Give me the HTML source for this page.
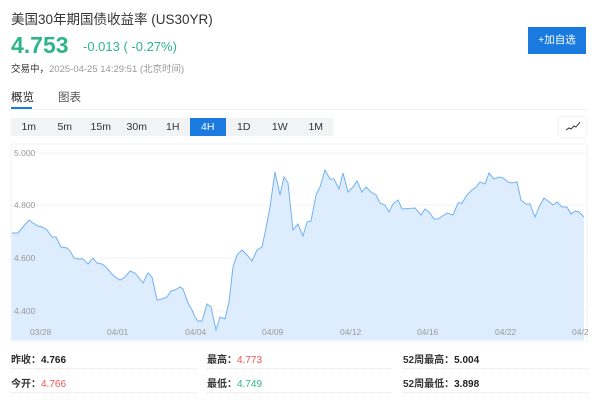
<!DOCTYPE html>
<html><head><meta charset="utf-8"><style>
*{margin:0;padding:0;box-sizing:border-box}
body{width:600px;height:407px;background:#fff;font-family:"Liberation Sans","Noto Sans CJK SC",sans-serif;position:relative;overflow:hidden;color:#333}
.a{position:absolute;white-space:nowrap}
.pb{position:absolute;top:118px;height:18px;width:35.5px;font-size:10.5px;line-height:18px;text-align:center;color:#333}
.st{font-size:10px;font-weight:bold;color:#222}
.dl{position:absolute;height:0;border-top:1px dotted #e4e4e4}
</style></head><body>
<div class="a" style="left:11px;top:8px;font-size:13.5px;color:#333">美国30年期国债收益率 (US30YR)</div>
<div class="a" style="left:11px;top:32px;font-size:23px;font-weight:bold;color:#2fb58a">4.753</div>
<div class="a" style="left:83px;top:39px;font-size:13px;color:#2fb58a">-0.013 ( -0.27%)</div>
<div class="a" style="left:11px;top:61px;font-size:9.5px;color:#333">交易中，<span style="color:#999">2025-04-25 14:29:51 (北京时间)</span></div>
<div class="a" style="left:528px;top:27px;width:58px;height:27px;background:#1a7ae0;color:#fff;font-size:10.5px;line-height:27px;text-align:center">+加自选</div>
<div class="a" style="left:11px;top:89px;font-size:11.5px;color:#222">概览</div>
<div class="a" style="left:58px;top:89px;font-size:11.5px;color:#555">图表</div>
<div class="a" style="left:11px;top:107px;width:21px;height:2px;background:#1a7ae0"></div>
<div class="a" style="left:11px;top:109px;width:576px;height:1px;background:#f0f0f0"></div>
<div class="a" style="left:11px;top:118px;width:322px;height:18px;background:#f2f3f5"></div>
<div class="pb" style="left:11px">1m</div>
<div class="pb" style="left:47px">5m</div>
<div class="pb" style="left:83px">15m</div>
<div class="pb" style="left:119px">30m</div>
<div class="pb" style="left:155px">1H</div>
<div class="pb" style="left:190px;background:#1a7ae0;color:#fff">4H</div>
<div class="pb" style="left:226px">1D</div>
<div class="pb" style="left:262px">1W</div>
<div class="pb" style="left:298px">1M</div>
<div class="a" style="left:559px;top:117px;width:27px;height:20px;background:#fff;border-radius:2px;box-shadow:0 0 2px #ddd"></div>
<svg class="a" style="left:559px;top:117px" width="27" height="20"><path d="M7 13 L10 11 L12 12 L15 9 L17 10 L21 5" fill="none" stroke="#333" stroke-width="1"/></svg>
<svg class="a" style="left:0;top:0" width="600" height="407">
<rect x="11" y="144" width="576" height="197" fill="none" stroke="#f2f2f2"/>
<g stroke="#f3f3f3"><line x1="11" y1="153" x2="587" y2="153"/><line x1="11" y1="205" x2="587" y2="205"/><line x1="11" y1="258" x2="587" y2="258"/><line x1="11" y1="311" x2="587" y2="311"/></g>
<path d="M11.7 233L18 233L23 227L29 220L33 223L38 226L42 227L47 230L52 237L56 237L61 247L67 248L70 251L74 258L78 259L83 259L88 264L93 258L97 263L102 264L106 267L111 273L115 277L120 280L125 277L130 271L135 273L143 283L148 273L152 277L157 300L162 299L167 297L171 291L175 290L180 287L183 289L188 303L192 310L195 317L198 321L202 321L207 304L211 307L216 330L220 317L225 319L229 302L233 267L237 255L242 250L248 256L252 261L257 250L262 247L266 228L270 207L275 172L280 195L284 177L288 183L293 230L298 224L300 229L303 236L307 222L311 221L316 195L320 187L325 170L330 179L334 179L339 189L343 173L348 192L353 187L357 181L362 192L366 187L371 192L376 195L380 203L385 205L389 212L393 204L398 200L402 209L415 208L421 215L425 209L430 213L434 219L438 219L447 213L453 215L458 203L462 203L467 195L472 190L476 187L480 182L485 184L489 173L494 179L499 177L503 178L508 182L512 183L517 182L521 200L526 204L530 204L535 217L539 207L544 198L548 201L553 205L557 202L562 207L567 207L571 214L575 211L579 212L584 217L584 340L11.7 340Z" fill="#deedfd"/>
<path d="M11.7 233L18 233L23 227L29 220L33 223L38 226L42 227L47 230L52 237L56 237L61 247L67 248L70 251L74 258L78 259L83 259L88 264L93 258L97 263L102 264L106 267L111 273L115 277L120 280L125 277L130 271L135 273L143 283L148 273L152 277L157 300L162 299L167 297L171 291L175 290L180 287L183 289L188 303L192 310L195 317L198 321L202 321L207 304L211 307L216 330L220 317L225 319L229 302L233 267L237 255L242 250L248 256L252 261L257 250L262 247L266 228L270 207L275 172L280 195L284 177L288 183L293 230L298 224L300 229L303 236L307 222L311 221L316 195L320 187L325 170L330 179L334 179L339 189L343 173L348 192L353 187L357 181L362 192L366 187L371 192L376 195L380 203L385 205L389 212L393 204L398 200L402 209L415 208L421 215L425 209L430 213L434 219L438 219L447 213L453 215L458 203L462 203L467 195L472 190L476 187L480 182L485 184L489 173L494 179L499 177L503 178L508 182L512 183L517 182L521 200L526 204L530 204L535 217L539 207L544 198L548 201L553 205L557 202L562 207L567 207L571 214L575 211L579 212L584 217" fill="none" stroke="#72b1f4" stroke-width="1"/>
<g font-family="Liberation Sans" font-size="8.5" fill="#999"><text x="14" y="156">5.000</text><text x="14" y="208">4.800</text><text x="14" y="261">4.600</text><text x="14" y="314">4.400</text>
<text x="30" y="335">03/28</text><text x="107" y="335">04/01</text><text x="185" y="335">04/04</text><text x="262" y="335">04/09</text><text x="340" y="335">04/12</text><text x="417" y="335">04/16</text><text x="495" y="335">04/22</text><text x="572" y="335">04/2</text></g>
</svg>
<div class="a st" style="left:11px;top:351px"><span style="color:#333">昨收：</span>4.766</div>
<div class="a st" style="left:207px;top:351px"><span style="color:#333">最高：</span><span style="color:#f05454;font-weight:normal">4.773</span></div>
<div class="a st" style="left:403px;top:351px"><span style="color:#333">52周最高：</span>5.004</div>
<div class="a st" style="left:11px;top:375px"><span style="color:#333">今开：</span><span style="color:#f05454;font-weight:normal">4.766</span></div>
<div class="a st" style="left:207px;top:375px"><span style="color:#333">最低：</span><span style="color:#2fb58a;font-weight:normal">4.749</span></div>
<div class="a st" style="left:403px;top:375px"><span style="color:#333">52周最低：</span>3.898</div>
<div class="dl" style="left:11px;top:368px;width:185px"></div><div class="dl" style="left:207px;top:368px;width:185px"></div><div class="dl" style="left:403px;top:368px;width:185px"></div>
<div class="dl" style="left:11px;top:392px;width:185px"></div><div class="dl" style="left:207px;top:392px;width:185px"></div><div class="dl" style="left:403px;top:392px;width:185px"></div>
</body></html>
